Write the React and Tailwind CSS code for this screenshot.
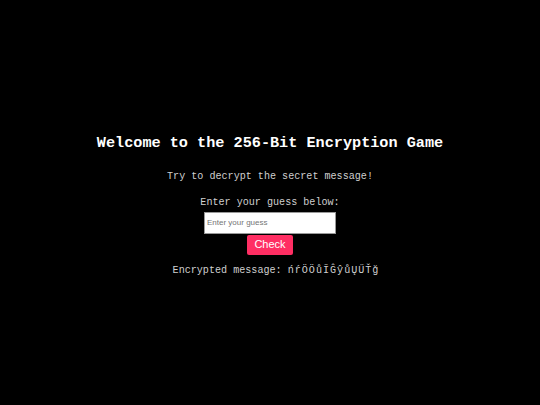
export default function App() {
  return (
    <div className="h-screen w-full bg-black pt-[5px] flex flex-col items-center justify-center text-center font-['Courier_New','Liberation_Mono',monospace]">
      <h1 className="text-[15.2px] leading-[20px] font-bold text-white">Welcome to the 256-Bit Encryption Game</h1>
      <p className="mt-[17px] text-[10.1px] leading-[14px] text-[#cfcfcf]">Try to decrypt the secret message!</p>
      <p className="mt-[12px] text-[10.1px] leading-[14px] text-[#cfcfcf]">Enter your guess below:</p>
      <input
        type="text"
        placeholder="Enter your guess"
        className="mt-[2px] w-[132px] h-[22px] bg-white px-[2px] text-[8px] text-black font-['Liberation_Sans',Arial,sans-serif] placeholder:text-[#757575] outline-none border border-[#999]"
      />
      <button className="mt-[1px] w-[46px] h-[20px] rounded-[2px] bg-[#ff2e63] text-white text-[11px] font-['Liberation_Sans',Arial,sans-serif]">
        Check
      </button>
      <p className="mt-[9px] ml-[12px] text-[10.1px] leading-[14px] text-[#cfcfcf]">
        Encrypted message: <span className="tracking-[1px]">ńŕÖÖůĨĜŷůŲŰŤğ</span>
      </p>
    </div>
  );
}
